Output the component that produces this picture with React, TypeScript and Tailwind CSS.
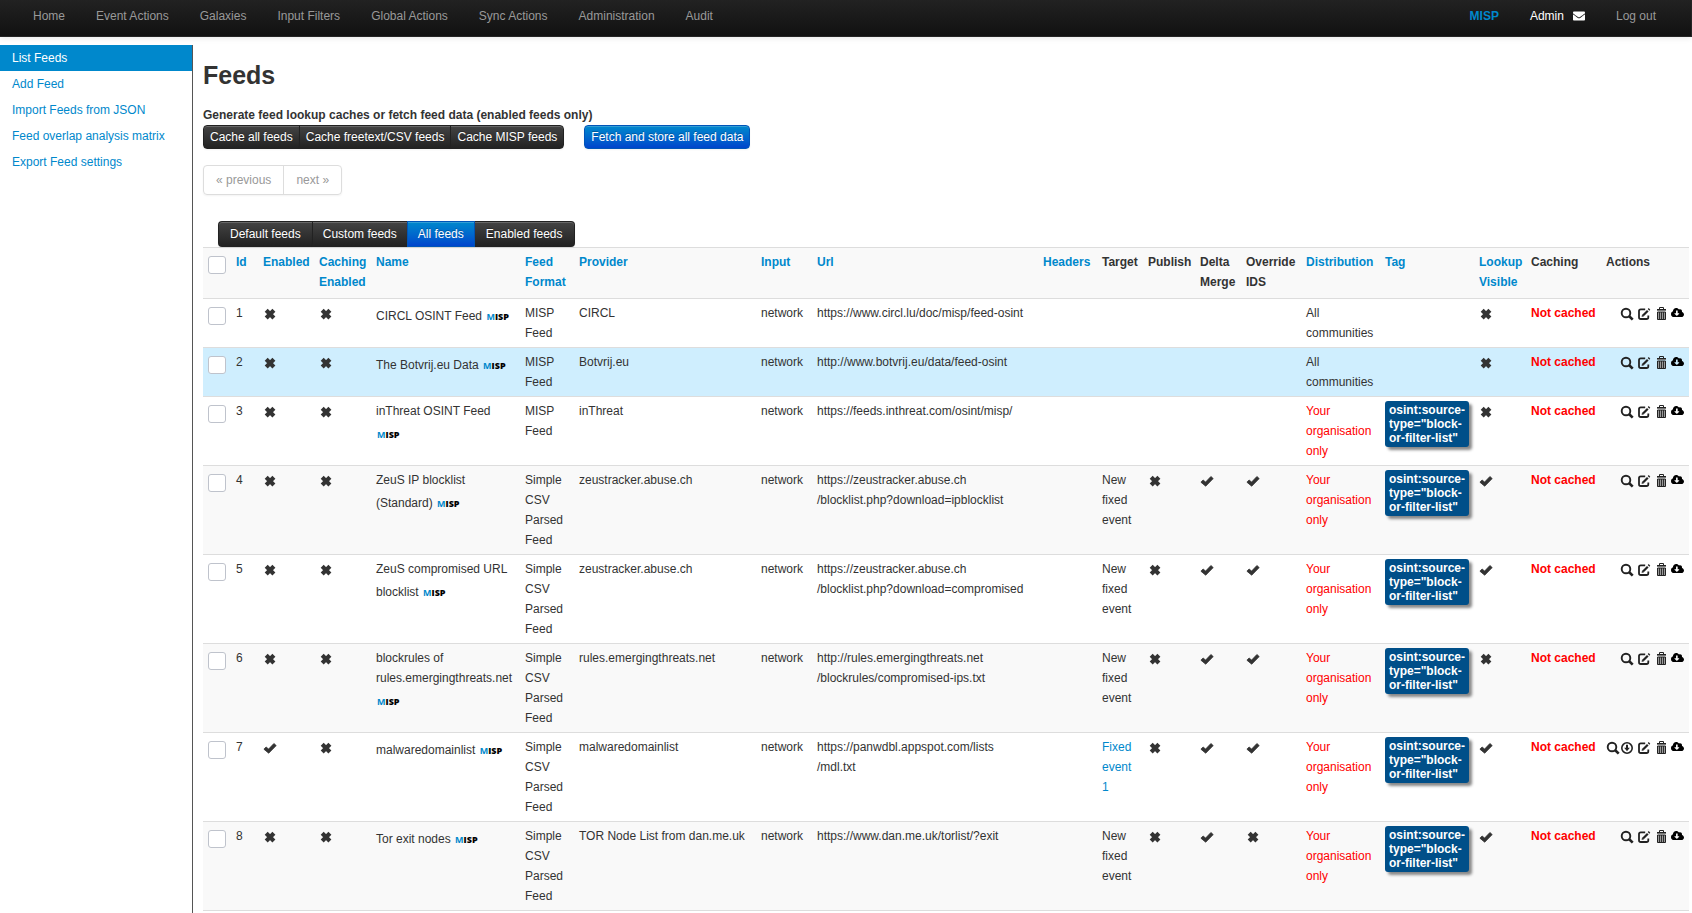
import React from "react";
import { FaCloudDownloadAlt, FaEnvelope } from "react-icons/fa";

type Target = "none" | "new" | "fixed";

interface Feed {
  id: number;
  enabled: boolean;
  name: string;
  format: string;
  provider: string;
  url: string[];
  target: Target;
  flags?: [boolean, boolean, boolean];
  restricted: boolean;
  lookupVisible: boolean;
  rowClass: string;
}

const CSV = "Simple CSV Parsed Feed";
const MISP = "MISP Feed";

const feeds: Feed[] = [
  { id: 1, enabled: false, name: "CIRCL OSINT Feed", format: MISP, provider: "CIRCL", url: ["https://www.circl.lu/doc/misp/feed-osint"], target: "none", restricted: false, lookupVisible: false, rowClass: "bg-white" },
  { id: 2, enabled: false, name: "The Botvrij.eu Data", format: MISP, provider: "Botvrij.eu", url: ["http://www.botvrij.eu/data/feed-osint"], target: "none", restricted: false, lookupVisible: false, rowClass: "bg-[#cfeefe]" },
  { id: 3, enabled: false, name: "inThreat OSINT Feed", format: MISP, provider: "inThreat", url: ["https://feeds.inthreat.com/osint/misp/"], target: "none", restricted: true, lookupVisible: false, rowClass: "bg-white" },
  { id: 4, enabled: false, name: "ZeuS IP blocklist (Standard)", format: CSV, provider: "zeustracker.abuse.ch", url: ["https://zeustracker.abuse.ch", "/blocklist.php?download=ipblocklist"], target: "new", flags: [false, true, true], restricted: true, lookupVisible: true, rowClass: "bg-[#f9f9f9]" },
  { id: 5, enabled: false, name: "ZeuS compromised URL blocklist", format: CSV, provider: "zeustracker.abuse.ch", url: ["https://zeustracker.abuse.ch", "/blocklist.php?download=compromised"], target: "new", flags: [false, true, true], restricted: true, lookupVisible: true, rowClass: "bg-white" },
  { id: 6, enabled: false, name: "blockrules of rules.emergingthreats.net", format: CSV, provider: "rules.emergingthreats.net", url: ["http://rules.emergingthreats.net", "/blockrules/compromised-ips.txt"], target: "new", flags: [false, true, true], restricted: true, lookupVisible: false, rowClass: "bg-[#f9f9f9]" },
  { id: 7, enabled: true, name: "malwaredomainlist", format: CSV, provider: "malwaredomainlist", url: ["https://panwdbl.appspot.com/lists", "/mdl.txt"], target: "fixed", flags: [false, true, true], restricted: true, lookupVisible: true, rowClass: "bg-white" },
  { id: 8, enabled: false, name: "Tor exit nodes", format: CSV, provider: "TOR Node List from dan.me.uk", url: ["https://www.dan.me.uk/torlist/?exit"], target: "new", flags: [false, true, false], restricted: true, lookupVisible: true, rowClass: "bg-[#f9f9f9]" },
];

const icon = "block size-3.5 shrink-0";

function State({ on }: { on: boolean }) {
  return (
    <svg viewBox="0 0 14 14" className="mt-px inline-block size-3.5 align-text-top" role="img" aria-label={on ? "Yes" : "No"}>
      {on ? (
        <path d="M.9 8.2 3.1 6l2.5 2.1L10.9 2.5 13.2 4.6 5.7 12.2Z" fill="#333" stroke="#333" strokeWidth=".8" strokeLinejoin="round" />
      ) : (
        <path d="M3.200 3.200 10.900 10.900M10.900 3.200 3.200 10.900" stroke="#333" strokeWidth="4.200" />
      )}
    </svg>
  );
}

function SearchIcon() {
  return (
    <svg viewBox="0 0 14 14" className={icon} fill="none" stroke="#222">
      <circle cx="6" cy="6" r="4.300" strokeWidth="1.900" />
      <path d="m9 9 3.700 3.700" strokeWidth="2.600" />
    </svg>
  );
}

function FetchIcon() {
  return (
    <svg viewBox="0 0 14 14" className={icon} fill="none" stroke="#222">
      <circle cx="7" cy="7" r="5.200" strokeWidth="1.600" />
      <path d="M7 3.700V8" strokeWidth="2" />
      <path d="M4.200 6.800h5.600L7 10.200Z" fill="#222" stroke="none" />
    </svg>
  );
}

function EditIcon() {
  return (
    <svg viewBox="0 0 14 14" className={icon} fill="none" stroke="#222">
      <path d="M8.200 2.300H3.800Q2 2.300 2 4.100v6.100Q2 12 3.800 12h5.700q1.800 0 1.800-1.800V8.400" strokeWidth="1.800" />
      <path d="M6 8.500 10.800 3.700" strokeWidth="2.200" />
      <path d="M4.600 9.800 5 7.500l1.900 1.900Z" fill="#222" stroke="none" />
      <path d="m11.500 2.900 1-1" strokeWidth="2.200" />
    </svg>
  );
}

function TrashIcon() {
  return (
    <svg viewBox="0 0 14 14" className={icon} fill="none" stroke="#222">
      <path d="M3 2.500h9" />
      <path d="M5.500 2.500V.5h4v2" />
      <path d="M3 3.500h9" stroke="#777" />
      <path d="M3.500 5v7.500h8V5Z" fill="#999" />
      <path d="M5.500 5v7.500M7.500 5v7.500M9.500 5v7.500" strokeWidth=".9" />
    </svg>
  );
}

function MispLogo() {
  return (
    <span className="inline-flex h-7 w-[27px] items-center pl-px align-middle font-['Open_Sans',sans-serif] text-[9px] leading-3 font-extrabold text-black">
      <span className="font-bold text-[#0088cc]">M</span>
      <span>ISP</span>
    </span>
  );
}

const buttonBase =
  "border text-white [text-shadow:0_-1px_0_rgba(0,0,0,0.25)] shadow-[inset_0_1px_0_rgba(255,255,255,0.2),0_1px_2px_rgba(0,0,0,0.05)]";
const dark = "border-[#222] bg-linear-to-b from-[#444] to-[#222]";
const primary = "border-[#0055b8] bg-linear-to-b from-[#0088cc] to-[#0044cc]";

const navItems = ["Home", "Event Actions", "Galaxies", "Input Filters", "Global Actions", "Sync Actions", "Administration", "Audit"];
const sideItems = ["List Feeds", "Add Feed", "Import Feeds from JSON", "Feed overlap analysis matrix", "Export Feed settings"];

const columns: { label: string; width: string; link?: boolean }[] = [
  { label: "Id", width: "w-[27px]", link: true },
  { label: "Enabled", width: "w-[56px]", link: true },
  { label: "Caching Enabled", width: "w-[57px]", link: true },
  { label: "Name", width: "w-[149px]", link: true },
  { label: "Feed Format", width: "w-[54px]", link: true },
  { label: "Provider", width: "w-[182px]", link: true },
  { label: "Input", width: "w-[56px]", link: true },
  { label: "Url", width: "w-[226px]", link: true },
  { label: "Headers", width: "w-[59px]", link: true },
  { label: "Target", width: "w-[46px]" },
  { label: "Publish", width: "w-[52px]" },
  { label: "Delta Merge", width: "w-[46px]" },
  { label: "Override IDS", width: "w-[60px]" },
  { label: "Distribution", width: "w-[79px]", link: true },
  { label: "Tag", width: "w-[94px]", link: true },
  { label: "Lookup Visible", width: "w-[52px]", link: true },
  { label: "Caching", width: "w-[75px]" },
  { label: "Actions", width: "w-[88px]" },
];

const cell = "border-t border-[#ddd] px-[5px] py-1 align-top";
const checkbox = "mt-1 block size-[18px] appearance-none rounded-[3px] border border-[#bfc3cc] bg-white";

function FeedRow({ feed }: { feed: Feed }) {
  return (
    <tr className={feed.rowClass}>
      <td className={cell}>
        <input type="checkbox" aria-label={feed.name} className={checkbox} />
      </td>
      <td className={cell}>{feed.id}</td>
      <td className={cell}><State on={feed.enabled} /></td>
      <td className={cell}><State on={false} /></td>
      <td className={cell}>{feed.name} <MispLogo /></td>
      <td className={cell}>{feed.format}</td>
      <td className={cell}>{feed.provider}</td>
      <td className={cell}>network</td>
      <td className={cell}>
        {feed.url.map((part) => (
          <span key={part} className="block">{part}</span>
        ))}
      </td>
      <td className={cell} />
      <td className={cell}>
        {feed.target === "new" && "New fixed event"}
        {feed.target === "fixed" && <a href="#event" className="text-[#0088cc]">Fixed event 1</a>}
      </td>
      {[0, 1, 2].map((i) => (
        <td key={i} className={cell}>{feed.flags && <State on={feed.flags[i]} />}</td>
      ))}
      <td className={feed.restricted ? `${cell} text-[#ff0000]` : cell}>
        {feed.restricted ? "Your organisation only" : "All communities"}
      </td>
      <td className={cell}>
        {feed.restricted && (
          <a href="#tag" className="block w-[84px] rounded-[3px] bg-[#004f89] px-1 py-0.5 leading-[14px] font-bold text-white shadow-[3px_3px_3px_#888888]">
            osint:source-type="block-or-filter-list"
          </a>
        )}
      </td>
      <td className={cell}><State on={feed.lookupVisible} /></td>
      <td className={`${cell} font-bold whitespace-nowrap text-[#ff0000]`}>Not cached</td>
      <td className={cell}>
        <div className="flex items-start justify-end gap-[3px] pt-1">
          <div className="flex">
            <a href="#view" aria-label="View" className="flex"><SearchIcon /></a>
            {feed.enabled && <a href="#fetch" aria-label="Fetch" className="flex"><FetchIcon /></a>}
          </div>
          <a href="#edit" aria-label="Edit" className="flex"><EditIcon /></a>
          <button type="button" aria-label="Delete" className="flex"><TrashIcon /></button>
          <a href="#download" aria-label="Download" className="flex">
            <FaCloudDownloadAlt className="h-[11px] w-[13px] text-black" />
          </a>
        </div>
      </td>
    </tr>
  );
}

export default function App() {
  return (
    <div className="flex min-h-screen flex-col bg-white font-['Liberation_Sans',Arial,sans-serif] text-xs leading-5 text-[#333]">
      <nav className="flex justify-between border-r border-b border-[#252525] bg-linear-to-b from-[#222] to-[#111] px-[18px] pt-1.5 pb-2.5 text-[#999] shadow-[0_1px_6px_rgba(0,0,0,0.1)]">
        <div className="flex gap-px">
          {navItems.map((item) => (
            <a key={item} href="#nav" className="px-[15px]">{item}</a>
          ))}
        </div>
        <div className="flex gap-px pr-0.5">
          <a href="#home" className="px-[15px] font-bold text-[#0088cc]">MISP</a>
          <a href="#profile" className="flex items-center gap-[9px] px-[15px] text-white">
            Admin <FaEnvelope className="size-3" />
          </a>
          <a href="#logout" className="px-[15px]">Log out</a>
        </div>
      </nav>

      <div className="flex grow pt-2">
        <aside className="w-[193px] shrink-0 border-r border-[#555]">
          {sideItems.map((item, i) => (
            <a
              key={item}
              href="#menu"
              className={i === 0 ? "block bg-[#0088cc] px-3 py-[3px] text-white" : "block px-3 py-[3px] text-[#0088cc]"}
            >
              {item}
            </a>
          ))}
        </aside>

        <main className="min-w-0 grow pr-[3px] pl-2.5">
          <h2 className="mt-2.5 mb-2.5 text-[25px] leading-10 font-bold">Feeds</h2>
          <p className="font-bold">Generate feed lookup caches or fetch feed data (enabled feeds only)</p>
          <div className="flex gap-5">
            <div className="flex">
              <button type="button" className={`${buttonBase} ${dark} rounded-l px-1.5 py-px`}>Cache all feeds</button>
              <button type="button" className={`${buttonBase} ${dark} -ml-px px-1.5 py-px`}>Cache freetext/CSV feeds</button>
              <button type="button" className={`${buttonBase} ${dark} -ml-px rounded-r px-1.5 py-px`}>Cache MISP feeds</button>
            </div>
            <button type="button" className={`${buttonBase} ${primary} rounded px-1.5 py-px`}>Fetch and store all feed data</button>
          </div>

          <div className="mt-4 flex w-fit rounded border border-[#ddd] text-[#999] shadow-[0_1px_2px_rgba(0,0,0,0.05)]">
            <a href="#previous" className="border-r border-[#ddd] px-3 py-1">« previous</a>
            <a href="#next" className="px-3 py-1">next »</a>
          </div>

          <div className="mt-[26px] ml-[15px] flex">
            <button type="button" className={`${buttonBase} ${dark} rounded-l border-r-0 px-[11px] py-0.5`}>Default feeds</button>
            <button type="button" className={`${buttonBase} ${dark} border-r-0 px-2.5 py-0.5`}>Custom feeds</button>
            <button type="button" className={`${buttonBase} ${primary} px-2.5 py-0.5`}>All feeds</button>
            <button type="button" className={`${buttonBase} ${dark} rounded-r border-l-0 px-[11px] py-0.5`}>Enabled feeds</button>
          </div>

          <table className="w-full table-fixed border-separate border-spacing-0 border-b border-[#ddd]">
            <thead>
              <tr className="bg-[#f9f9f9] text-left">
                <th className={`${cell} w-7`}>
                  <input type="checkbox" aria-label="Select all" className={checkbox} />
                </th>
                {columns.map((c) => (
                  <th key={c.label} className={`${cell} ${c.width} pb-1.5`}>
                    {c.link ? <a href="#sort" className="text-[#0088cc]">{c.label}</a> : c.label}
                  </th>
                ))}
              </tr>
            </thead>
            <tbody>
              {feeds.map((feed) => (
                <FeedRow key={feed.id} feed={feed} />
              ))}
            </tbody>
          </table>
        </main>
      </div>
    </div>
  );
}
